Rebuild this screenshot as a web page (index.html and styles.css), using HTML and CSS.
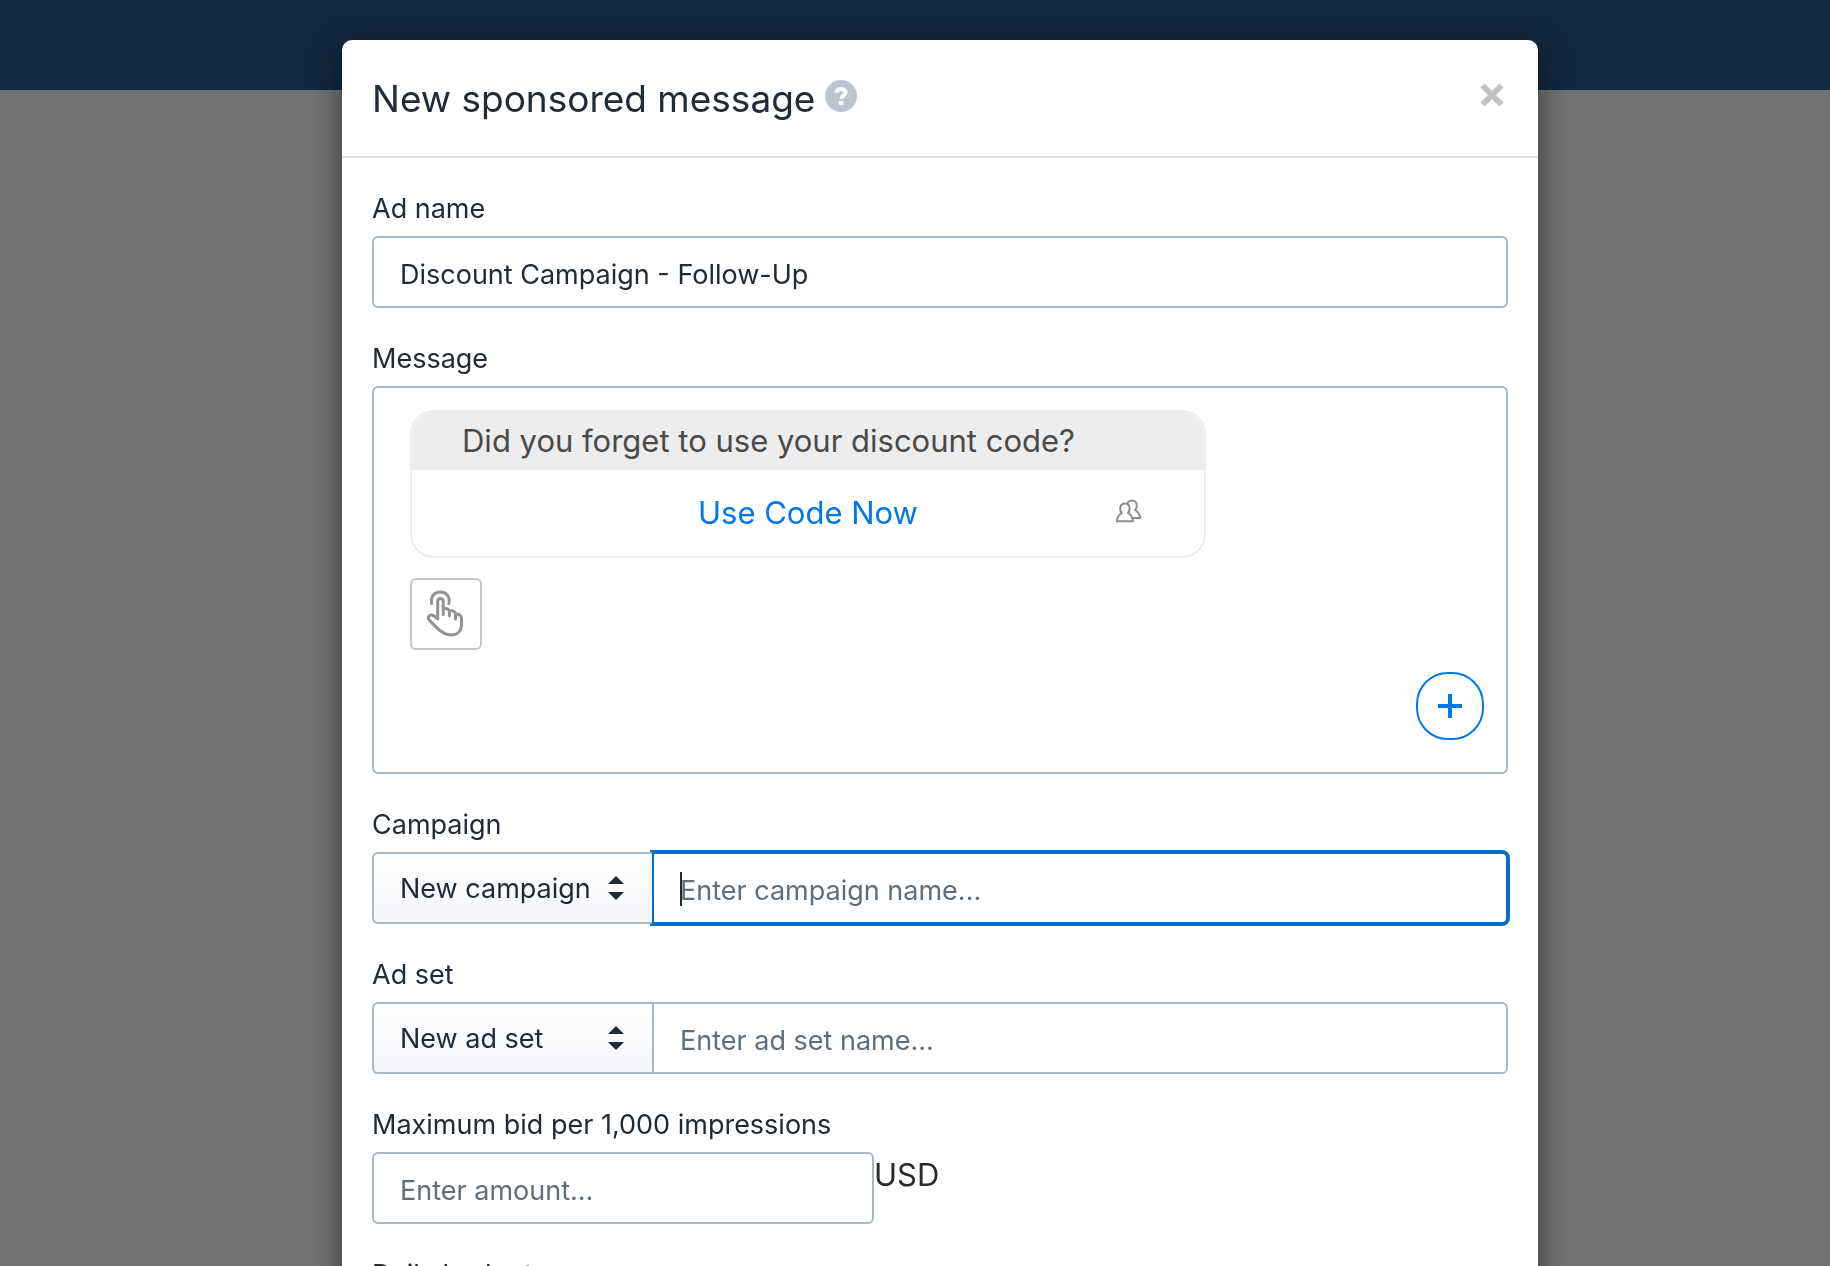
FILE: index.html
```html
<!DOCTYPE html>
<html lang="en">
<head>
  <meta charset="UTF-8" />
  <title>New sponsored message</title>
  <link rel="stylesheet" href="styles.css">
</head>
<body>

  <!-- TOP BAR -->
  <header class="topbar"></header>

  <!-- MODAL -->
  <div class="overlay">
    <form class="modal" role="dialog" aria-labelledby="modalTitle">
      <div class="modal-header">
        <h1 class="modal-title" id="modalTitle">New sponsored message</h1>
        <button type="button" class="icon-btn help-btn">
          <svg width="32" height="32" viewBox="0 0 32 32">
            <circle cx="16" cy="16" r="16" fill="#bcc5cf" />
            <path d="M11.400 12.800C11.600 10.200 13.400 9 16 9c2.700 0 4.600 1.400 4.600 3.600 0 3.200-4.300 2.900-4.300 6.400" fill="none" stroke="#fff" stroke-width="4" />
            <rect x="14" y="21" width="4.500" height="4.200" rx="1" fill="#fff" />
          </svg>
        </button>
        <button type="button" class="icon-btn close-btn">
          <svg width="24" height="24" viewBox="0 0 24 24">
            <path d="M2.500 2.500l19 19M21.500 2.500l-19 19" stroke="#c0c2c4" stroke-width="6" />
          </svg>
        </button>
      </div>

      <div class="modal-body">
        <div class="field">
          <label class="label" for="adName">Ad name</label>
          <input class="input" id="adName" type="text" value="Discount Campaign - Follow-Up">
        </div>

        <div class="field">
          <div class="label">Message</div>
          <div class="message-box">
            <div class="bubble">
              <div class="bubble-text">Did you forget to use your discount code?</div>
              <button type="button" class="bubble-action">
                <span>Use Code Now</span>
                <svg class="people-icon" width="28" height="24" viewBox="0 0 28 24" fill="none" stroke="#8c8c8c" stroke-width="2">
                  <path d="M2 22.200c0-4.200 2-6.400 4.700-8.200-1-1.200-1.500-2.500-1.500-4.100C5.200 6.500 7 4.400 9.900 4.400s4.700 2.100 4.700 5.500c0 1.600-.5 2.900-1.500 4.100 2.700 1.800 4.700 4 4.700 8.200z" />
                  <path d="M12.300 4.600c.8-1.700 2.400-3 4.700-3 3 0 4.700 2.200 4.700 5.300 0 1.700-.5 3-1.500 4.100 2.700 1.800 4.900 4 4.900 8.100h-7.500" />
                </svg>
              </button>
            </div>
            <button type="button" class="tap-btn">
              <svg width="40" height="48" viewBox="0 0 40 48" fill="none" stroke="#929292" stroke-width="3" stroke-linecap="round" stroke-linejoin="round">
                <path d="M5.700 13.500c-1.500-7 2.600-11.500 8.600-11.500s10.100 4.500 8.500 11.500" />
                <path d="M11.700 29V11.800c0-4.500 5.500-4.500 5.500 0v12.700M17.200 19.200c3-1.500 6.200-.5 6.200 2.800v3.700M23.400 21c3.500-1 6 .5 6 3.500v4.500M29.400 24.600c4-.9 6.100 1 6.100 4.200v5.400c0 6.600-4 10.800-10 10.800-9 0-15-7.500-22.200-14.900-2-2.200-.7-4.600 1.600-5 2.300-.4 4.700 1.900 6.800 3.900" />
              </svg>
            </button>
            <button type="button" class="add-btn">
              <svg width="24" height="24" viewBox="0 0 24 24">
                <path d="M12 0v24M0 12h24" stroke="#0078e7" stroke-width="4" />
              </svg>
            </button>
          </div>
        </div>

        <div class="field">
          <label class="label" for="campaignName">Campaign</label>
          <div class="input-group">
            <div class="select-wrap">
              <select class="select" aria-label="Campaign">
                <option>New campaign</option>
              </select>
              <svg class="select-arrows" width="16" height="24" viewBox="0 0 16 24" fill="#212b36">
                <path d="M8 0l8 8H0zM0 16h16l-8 8z" />
              </svg>
            </div>
            <div class="input-wrap active">
              <input class="input" id="campaignName" type="text" placeholder="Enter campaign name...">
            </div>
          </div>
        </div>

        <div class="field">
          <label class="label" for="adSetName">Ad set</label>
          <div class="input-group">
            <div class="select-wrap">
              <select class="select" aria-label="Ad set">
                <option>New ad set</option>
              </select>
              <svg class="select-arrows" width="16" height="24" viewBox="0 0 16 24" fill="#212b36">
                <path d="M8 0l8 8H0zM0 16h16l-8 8z" />
              </svg>
            </div>
            <div class="input-wrap">
              <input class="input" id="adSetName" type="text" placeholder="Enter ad set name...">
            </div>
          </div>
        </div>

        <div class="field">
          <label class="label" for="maxBid">Maximum bid per 1,000 impressions</label>
          <div class="amount">
            <input class="input" id="maxBid" type="text" placeholder="Enter amount...">
            <span class="currency">USD</span>
          </div>
        </div>

        <div class="field">
          <label class="label" for="dailyBudget">Daily budget</label>
          <div class="amount">
            <input class="input" id="dailyBudget" type="text">
          </div>
        </div>
      </div>
    </form>
  </div>

</body>
</html>
```
FILE: styles.css
```css
/* RESET */
* {
  margin: 0;
  padding: 0;
  box-sizing: border-box;
}

body {
  background-color: #707271;
  font-family: Inter, "Liberation Sans", sans-serif;
  font-size: 27px;
  color: #212b36;
}

button, input, select {
  font: inherit;
  color: inherit;
}

button {
  background: none;
  border: none;
  cursor: pointer;
}

svg {
  display: block;
}

.topbar {
  height: 90px;
  background-color: #12283f;
}

/* MODAL */
.overlay {
  position: fixed;
  inset: 0;
  display: flex;
  justify-content: center;
  align-items: flex-start;
  padding: 40px 0 0 50px;
  overflow: hidden;
}

.modal {
  width: 100%;
  max-width: 1196px;
  background-color: #fff;
  border-radius: 10px;
  box-shadow: 0 10px 30px rgba(0, 0, 0, 0.5);
}

.modal-header {
  display: flex;
  align-items: center;
  gap: 10px;
  padding: 30px 34px 28px 30px;
  border-bottom: 2px solid #dfdfdf;
}

.modal-title {
  font-size: 37px;
  font-weight: 400;
  line-height: 58px;
}

.icon-btn {
  margin-bottom: 6px;
}

.close-btn {
  margin-left: auto;
  margin-bottom: 8px;
}

.modal-body {
  display: flex;
  flex-direction: column;
  gap: 30px;
  padding: 30px;
}

/* FIELDS */
.label {
  display: block;
  line-height: 42px;
  margin-bottom: 6px;
}

.input {
  display: block;
  width: 100%;
  height: 72px;
  padding: 4px 26px 0;
  background-color: #fff;
  border: 2px solid #a9b8c5;
  border-radius: 6px;
  outline: none;
}

.input::placeholder {
  color: #5f6e7c;
  opacity: 1;
}

.input-group {
  display: flex;
}

.select-wrap {
  position: relative;
  z-index: 1;
  flex: 0 0 280px;
}

.select {
  display: block;
  width: 100%;
  height: 72px;
  padding: 0 26px;
  appearance: none;
  background: linear-gradient(#fefefe, #f5f6fa);
  border: 2px solid #a9b8c5;
  border-right: none;
  border-radius: 6px 0 0 6px;
  outline: none;
}

.select-arrows {
  position: absolute;
  top: 24px;
  right: 28px;
  pointer-events: none;
}

.input-wrap {
  position: relative;
  flex: 1;
}

.input-wrap .input {
  border-radius: 0 6px 6px 0;
}

.active .input {
  border-color: #006fcc;
  box-shadow: 0 0 0 2px #006fcc;
}

/* Text cursor of the active input */
.active::after {
  content: "";
  position: absolute;
  top: 20px;
  left: 28px;
  width: 2px;
  height: 34px;
  background-color: #212b36;
}

.amount {
  display: flex;
}

.amount .input {
  width: 502px;
}

.currency {
  font-size: 31px;
  line-height: 46px;
  color: #2a2a2a;
}

/* MESSAGE PREVIEW */
.message-box {
  display: flex;
  flex-direction: column;
  align-items: flex-start;
  padding: 22px 22px 32px 36px;
  border: 2px solid #a9b8c5;
  border-radius: 6px;
}

.bubble {
  width: 100%;
  max-width: 796px;
  margin-bottom: 20px;
  border: 2px solid #ededed;
  border-radius: 24px;
  overflow: hidden;
  font-size: 31px;
}

.bubble-text {
  padding: 0 50px;
  line-height: 58px;
  background-color: #ededed;
  color: #4a4a4a;
}

.bubble-action {
  position: relative;
  display: block;
  width: 100%;
  line-height: 86px;
  color: #0078e7;
}

.people-icon {
  position: absolute;
  top: 29px;
  right: 61px;
}

.tap-btn {
  display: grid;
  place-items: center;
  width: 72px;
  height: 72px;
  margin-bottom: 22px;
  border: 2px solid #c6c6c6;
  border-radius: 6px;
}

.add-btn {
  display: grid;
  place-items: center;
  align-self: flex-end;
  width: 68px;
  height: 68px;
  border: 2px solid #0078e7;
  border-radius: 32px;
}
```
